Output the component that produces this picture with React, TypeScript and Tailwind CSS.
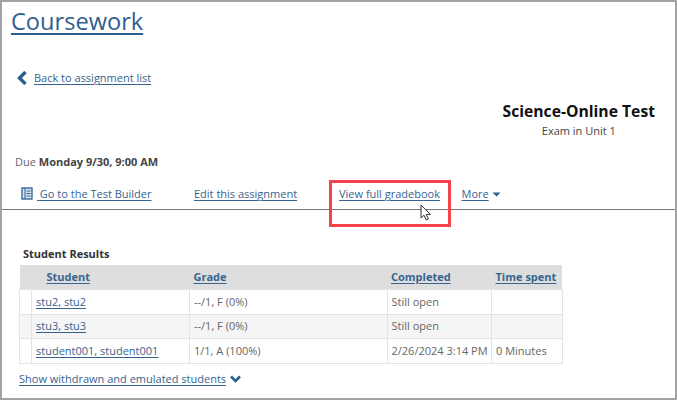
import React from "react";

const link = "text-[#36648f] underline underline-offset-2";

function Row({ name, grade, done, time, alt }: { name: string; grade: string; done: string; time: string; alt?: boolean }) {
  const cell = "border border-[#e3e3e3] align-middle h-[24.5px] p-0 pl-[4px] whitespace-nowrap";
  return (
    <tr className={alt ? "bg-[#f5f5f5]" : "bg-white"}>
      <td className={cell} />
      <td className={cell}><a className={link}>{name}</a></td>
      <td className={cell}>{grade}</td>
      <td className={cell}>{done}</td>
      <td className={cell}>{time}</td>
    </tr>
  );
}

export default function App() {
  return (
    <div className="relative w-[677px] h-[400px] overflow-hidden bg-white border-2 border-[#a3a3a3] font-['Open_Sans',sans-serif] text-[#666]">
      <h1 className="ml-[9px] mt-[2px] h-[34px] text-[23.6px] leading-[34px]">
        <a className="text-[#2f5f8f] underline decoration-[2px] underline-offset-[3px]">Coursework</a>
      </h1>

      <div className="ml-[15px] mt-[32px] flex items-center gap-[6px] text-[11px] leading-[16px]">
        <svg width="11" height="14" viewBox="0 0 11 14" className="shrink-0">
          <path d="M8.5 1 L2.5 7 L8.5 13" fill="none" stroke="#2a5f93" strokeWidth="3.4" />
        </svg>
        <a className={link}>Back to assignment list</a>
      </div>

      <div className="mr-[20px] mt-[15px] ml-auto w-fit text-center">
        <div className="text-[15.7px] leading-[21.5px] font-bold text-[#111]">Science-Online Test</div>
        <div className="text-[11px] leading-[16px] text-[#444]">Exam in Unit 1</div>
      </div>

      <div className="ml-[13px] mt-[15.5px] text-[11px] leading-[16px]">
        Due <b className="font-bold text-[#444]">Monday 9/30, 9:00 AM</b>
      </div>

      <div className="mt-[16px] h-[24px] border-b border-[#777] flex items-start pl-[19px] text-[11px] leading-[16px]">
        <svg width="13" height="13" viewBox="0 0 13 13" className="shrink-0 mt-[1px]">
          <rect x="1" y="1" width="10" height="11" fill="#dbe6f0" stroke="#2a5f93" strokeWidth="1.3" />
          <path d="M4 1v11M5.5 4h4M5.5 6.5h4M5.5 9h4" stroke="#2a5f93" strokeWidth="1" />
        </svg>
        <div className="ml-[3px] w-[157px] shrink-0"><a className={link}>{"\u00A0"}Go to the Test Builder</a></div>
        <div className="w-[145px] shrink-0"><a className={link}>Edit this assignment</a></div>
        <div className="w-[122.5px] shrink-0"><a className={link}>View full gradebook</a></div>
        <a className={link}>More</a>
        <svg width="9" height="5" viewBox="0 0 9 5" className="ml-[3px] mt-[6px]">
          <path d="M0.5 0.5h8L4.5 4.5z" fill="#2a5f93" />
        </svg>
      </div>

      <div className="ml-[21px] mt-[35.5px] text-[11px] leading-[16px] font-bold text-[#333]">Student Results</div>

      <table className="ml-[17px] mt-[3px] w-[542.5px] table-fixed border-collapse text-[11px] leading-[16px]">
        <colgroup>
          <col className="w-[12px]" />
          <col className="w-[158px]" />
          <col className="w-[197.5px]" />
          <col className="w-[104.5px]" />
          <col className="w-[70.5px]" />
        </colgroup>
        <thead>
          <tr className="bg-[#dedede] h-[25px] font-bold">
            <th />
            <th className="text-left font-bold pl-[15px]"><a className={link}>Student</a></th>
            <th className="text-left font-bold pl-[4px]"><a className={link}>Grade</a></th>
            <th className="text-left font-bold pl-[4px]"><a className={link}>Completed</a></th>
            <th className="text-left font-bold pl-[4px] whitespace-nowrap"><a className={link}>Time spent</a></th>
          </tr>
        </thead>
        <tbody>
          <Row name="stu2, stu2" grade="--/1, F (0%)" done="Still open" time="" />
          <Row name="stu3, stu3" grade="--/1, F (0%)" done="Still open" time="" alt />
          <Row name="student001, student001" grade="1/1, A (100%)" done="2/26/2024 3:14 PM" time="0 Minutes" />
        </tbody>
      </table>

      <div className="ml-[17px] mt-[7px] flex items-center gap-[4px] text-[11px] leading-[16px]">
        <a className={link}>Show withdrawn and emulated students</a>
        <svg width="11" height="8" viewBox="0 0 11 8">
          <path d="M1 1.5 L5.5 6 L10 1.5" fill="none" stroke="#2a5f93" strokeWidth="2.6" />
        </svg>
      </div>

      <div className="absolute left-[327px] top-[178px] w-[122px] h-[47px] border-[3px] border-[#f4444c]" />
      <svg className="absolute left-[418px] top-[202px]" width="13" height="18" viewBox="0 0 13 18">
        <path d="M1 1 V14 L4 11.2 L6.2 16 L8.4 15 L6.2 10.4 H10.4 Z" fill="#fff" stroke="#333" strokeWidth="1" />
      </svg>
    </div>
  );
}
